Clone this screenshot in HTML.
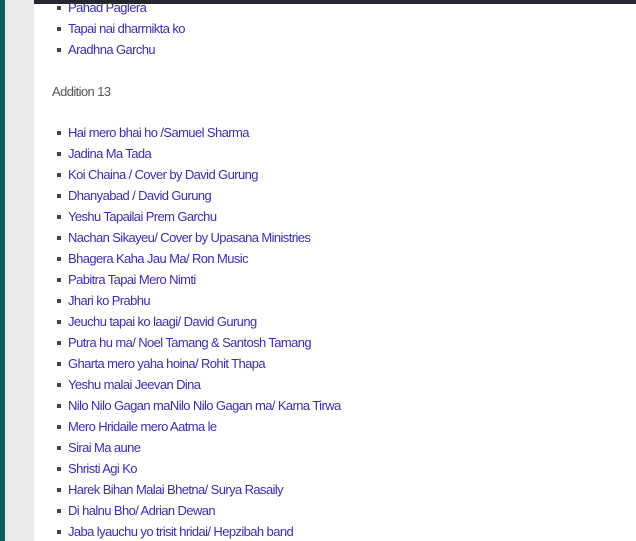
<!DOCTYPE html>
<html><head><style>
body{margin:0;width:636px;height:541px;overflow:hidden;background:#fff;position:relative;font-family:"Liberation Sans",sans-serif;}
.teal{position:absolute;left:0;top:0;width:5px;height:541px;background:#0d5e5a}
.grey{position:absolute;left:5px;top:0;width:29px;height:541px;background:#e9e9e9}
.bar{position:absolute;left:34px;top:0;right:0;height:4px;background:#26272c}
.l{position:absolute;left:68px;font-size:13px;letter-spacing:-0.6px;color:#3a2fae;line-height:16px;white-space:nowrap;margin-top:1px}
.l:before{content:"";position:absolute;left:-11px;top:6px;width:4px;height:4px;background:#444}
.h{position:absolute;left:52px;top:84px;font-size:13px;letter-spacing:-0.6px;color:#555;line-height:16px}
</style></head><body>
<div class="teal"></div><div class="grey"></div><div class="bar"></div>
<div class="l" style="top:-1px">Pahad Paglera</div>
<div class="l" style="top:20px">Tapai nai dharmikta ko</div>
<div class="l" style="top:41px">Aradhna Garchu</div>
<div class="h">Addition 13</div>
<div class="l" style="top:124px">Hai mero bhai ho /Samuel Sharma</div>
<div class="l" style="top:145px">Jadina Ma Tada</div>
<div class="l" style="top:166px">Koi Chaina / Cover by David Gurung</div>
<div class="l" style="top:187px">Dhanyabad / David Gurung</div>
<div class="l" style="top:208px">Yeshu Tapailai Prem Garchu</div>
<div class="l" style="top:229px">Nachan Sikayeu/ Cover by Upasana Ministries</div>
<div class="l" style="top:250px">Bhagera Kaha Jau Ma/ Ron Music</div>
<div class="l" style="top:271px">Pabitra Tapai Mero Nimti</div>
<div class="l" style="top:292px">Jhari ko Prabhu</div>
<div class="l" style="top:313px">Jeuchu tapai ko laagi/ David Gurung</div>
<div class="l" style="top:334px">Putra hu ma/ Noel Tamang &amp; Santosh Tamang</div>
<div class="l" style="top:355px">Gharta mero yaha hoina/ Rohit Thapa</div>
<div class="l" style="top:376px">Yeshu malai Jeevan Dina</div>
<div class="l" style="top:397px">Nilo Nilo Gagan maNilo Nilo Gagan ma/ Karna Tirwa</div>
<div class="l" style="top:418px">Mero Hridaile mero Aatma le</div>
<div class="l" style="top:439px">Sirai Ma aune</div>
<div class="l" style="top:460px">Shristi Agi Ko</div>
<div class="l" style="top:481px">Harek Bihan Malai Bhetna/ Surya Rasaily</div>
<div class="l" style="top:502px">Di halnu Bho/ Adrian Dewan</div>
<div class="l" style="top:523px">Jaba lyauchu yo trisit hridai/ Hepzibah band</div>
</body></html>
